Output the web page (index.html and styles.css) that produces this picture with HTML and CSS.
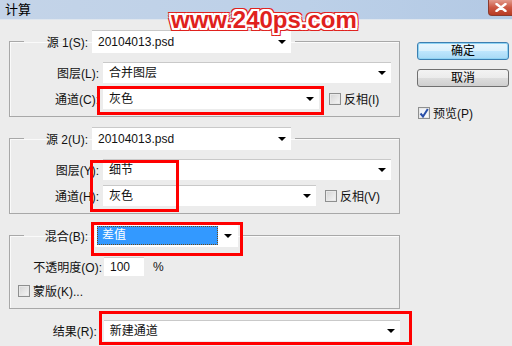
FILE: index.html
```html
<!DOCTYPE html>
<html>
<head>
  <meta charset="utf-8">
  <link rel="stylesheet" href="styles.css">
</head>
<body>
  <div class="titlebar">
    <span class="title">计算</span>
    <button class="close-btn">
      <svg width="12" height="9" viewBox="0 0 12 9"><path d="M1.5 1 L10.5 8 M10.5 1 L1.5 8" stroke="#fff" stroke-width="2.4" stroke-linecap="round"/></svg>
    </button>
  </div>

  <div class="dialog">
    <div class="main">
      <fieldset class="group">
        <legend class="group-head">
          <span class="head-label">源 1(S):</span>
          <div class="select src-select"><span>20104013.psd</span><i class="arrow"></i></div>
        </legend>
        <div class="row">
          <span class="label">图层(L):</span>
          <div class="select wide"><span>合并图层</span><i class="arrow"></i></div>
        </div>
        <div class="row">
          <span class="label">通道(C):</span>
          <div class="select channel"><span>灰色</span><i class="arrow"></i></div>
          <label class="check invert"><span class="box"></span>反相(I)</label>
        </div>
      </fieldset>

      <fieldset class="group">
        <legend class="group-head">
          <span class="head-label">源 2(U):</span>
          <div class="select src-select"><span>20104013.psd</span><i class="arrow"></i></div>
        </legend>
        <div class="row">
          <span class="label">图层(Y):</span>
          <div class="select wide"><span>细节</span><i class="arrow"></i></div>
        </div>
        <div class="row">
          <span class="label">通道(H):</span>
          <div class="select channel channel-2"><span>灰色</span><i class="arrow"></i></div>
          <label class="check invert-2"><span class="box"></span>反相(V)</label>
        </div>
      </fieldset>

      <fieldset class="group group-blend">
        <legend class="group-head">
          <span class="head-label">混合(B):</span>
          <div class="select blend-select"><span class="picked">差值</span><i class="arrow"></i></div>
        </legend>
        <div class="row opacity-row">
          <span class="label opacity-label">不透明度(O):</span>
          <div class="field">100</div>
          <span class="unit">%</span>
        </div>
        <label class="check mask"><span class="box"></span>蒙版(K)...</label>
      </fieldset>

      <div class="row result-row">
        <span class="label result-label">结果(R):</span>
        <div class="select result"><span>新建通道</span><i class="arrow"></i></div>
      </div>
    </div>

    <div class="side">
      <button class="btn btn-ok">确定</button>
      <button class="btn">取消</button>
      <label class="check preview">
        <span class="box checked">
          <svg width="10" height="10" viewBox="0 0 10 10"><path d="M1.5 5.5 L4 8.5 L8.8 1" fill="none" stroke="#2a4fa8" stroke-width="2"/></svg>
        </span>预览(P)
      </label>
    </div>
  </div>

  <div class="watermark">www.240ps.com</div>

  <!-- red annotation boxes -->
  <div class="mark mark-1"></div>
  <div class="mark mark-2"></div>
  <div class="mark mark-3"></div>
  <div class="mark mark-4"></div>
</body>
</html>
```

FILE: styles.css
```css
body {
  margin: 0;
  width: 512px;
  height: 346px;
  overflow: hidden;
  position: relative;
  background: #ececec;
  font-family: "Liberation Sans", "Noto Sans CJK SC", sans-serif;
  font-size: 12px;
  color: #111;
}

.titlebar {
  height: 20px;
  display: flex;
  justify-content: space-between;
  align-items: flex-start;
  background: linear-gradient(to right, #c4d4e8, #bcd0e8 60%, #b3c9e4);
  border-bottom: 1px solid #dfe6ee;
  box-sizing: border-box;
}

.title {
  padding: 3px 0 0 5px;
  font-size: 13px;
  line-height: 14px;
  color: #000;
}

.close-btn {
  width: 24px;
  height: 16px;
  padding: 0;
  border: 1px solid #8a3b2e;
  border-top: none;
  border-right: none;
  border-radius: 0 0 0 4px;
  background: linear-gradient(#e29a8c, #cc5843 50%, #b83a22);
  display: flex;
  align-items: center;
  justify-content: center;
}

.dialog {
  display: flex;
}

.main {
  width: 400px;
}

/* group boxes */
.group {
  margin: 10px 0 0 9px;
  padding: 9px 0 7px 0;
  width: 391px;
  box-sizing: border-box;
  border: 1px solid #a8a8a8;
  box-shadow: inset 1px 1px 0 #fafafa;
}

.group-head {
  margin-left: 14px;
  padding: 0 4px 0 0;
  display: flex;
  align-items: center;
}

.head-label {
  width: 64px;
  text-align: right;
  margin-right: 4px;
}

.row {
  display: flex;
  align-items: center;
  height: 21px;
}

.row + .row {
  margin-top: 5px;
}

.label {
  width: 89px;
  text-align: right;
  margin-right: 4px;
}

/* dropdowns */
.select {
  height: 21px;
  box-sizing: border-box;
  background: #fff;
  border-top: 1px solid #c9c9c9;
  display: flex;
  align-items: center;
  justify-content: space-between;
  padding: 0 5px 0 6px;
  line-height: 16px;
}

.src-select {
  width: 199px;
  height: 23px;
}

.wide {
  width: 288px;
}

.channel {
  width: 216px;
}

.channel-2 {
  width: 213px;
}

.arrow {
  width: 0;
  height: 0;
  border-left: 4px solid transparent;
  border-right: 4px solid transparent;
  border-top: 4px solid #000;
}

/* checkboxes */
.check {
  display: flex;
  align-items: center;
  gap: 3px;
}

.box {
  width: 12px;
  height: 12px;
  box-sizing: border-box;
  border: 1px solid #8e8f8f;
  background: linear-gradient(135deg, #d4d4d4, #f6f6f6);
  box-shadow: inset 0 0 0 1px #e8e8e8;
  display: flex;
  align-items: center;
  justify-content: center;
}

.box.checked {
  background: linear-gradient(135deg, #e9edf5, #fdfdfd);
}

.invert {
  margin-left: 10px;
}

.invert-2 {
  margin-left: 9px;
}

/* blend group */
.group-blend {
  margin-top: 9px;
  padding: 10px 0 9px 0;
}

.group-blend .group-head {
  padding-right: 5px;
}

.group-blend .head-label {
  margin-right: 7px;
}

.blend-select {
  width: 143px;
  height: 24px;
  padding: 0 6px 0 2px;
}

.picked {
  width: 121px;
  height: 19px;
  box-sizing: border-box;
  background: #3399ff;
  color: #fff;
  border: 1px dotted #6b4a1a;
  padding-left: 4px;
  line-height: 16px;
}

.opacity-row {
  height: 19px;
}

.opacity-label {
  width: 92px;
  margin-right: 2px;
}

.field {
  width: 40px;
  height: 19px;
  box-sizing: border-box;
  background: #fff;
  border-top: 1px solid #d0d0d0;
  padding: 1px 0 0 6px;
  line-height: 16px;
}

.unit {
  margin-left: 9px;
}

.mask {
  margin: 6px 0 0 8px;
}

/* result */
.result-row {
  margin-top: 11px;
}

.result-label {
  width: 97px;
  margin-right: 7px;
}

.result {
  width: 297px;
}

/* right column */
.side {
  margin-left: 17px;
  padding-top: 22px;
  width: 92px;
  display: flex;
  flex-direction: column;
}

.btn {
  width: 92px;
  height: 18px;
  padding: 0;
  border: 1px solid #707070;
  border-radius: 3px;
  background: linear-gradient(#f3f3f3, #ebebeb 50%, #dddddd 51%, #cfcfcf);
  font-family: inherit;
  font-size: 12px;
  color: #000;
  line-height: 15px;
}

.btn + .btn {
  margin-top: 9px;
}

.btn-ok {
  border-color: #3c7fb1;
  background: linear-gradient(#eaf6fd, #d9f0fc 50%, #bee6fd 51%, #a7d9f5);
  box-shadow: inset 0 0 0 1px #8fd3f3;
}

.preview {
  margin-top: 17px;
  margin-left: 1px;
}

/* watermark */
.watermark {
  position: absolute;
  left: 171px;
  top: 7px;
  font-family: "Liberation Sans", sans-serif;
  font-weight: bold;
  font-size: 24px;
  line-height: 26px;
  color: #e0211d;
  text-shadow:
    2px 0 0 #fff, -2px 0 0 #fff, 0 2px 0 #fff, 0 -2px 0 #fff,
    2px 2px 0 #fff, -2px -2px 0 #fff, 2px -2px 0 #fff, -2px 2px 0 #fff,
    3px 0 0 #e0211d, -3px 0 0 #e0211d, 0 3px 0 #e0211d, 0 -3px 0 #e0211d,
    3px 3px 0 #e0211d, -3px -3px 0 #e0211d, 3px -3px 0 #e0211d, -3px 3px 0 #e0211d;
}

/* red annotation boxes */
.mark {
  position: absolute;
  box-sizing: border-box;
  border: 3px solid #ff0000;
}

.mark-1 {
  left: 97px;
  top: 86px;
  width: 227px;
  height: 29px;
}

.mark-2 {
  left: 90px;
  top: 160px;
  width: 89px;
  height: 52px;
}

.mark-3 {
  left: 91px;
  top: 222px;
  width: 152px;
  height: 34px;
}

.mark-4 {
  left: 99px;
  top: 311px;
  width: 313px;
  height: 34px;
}
```
